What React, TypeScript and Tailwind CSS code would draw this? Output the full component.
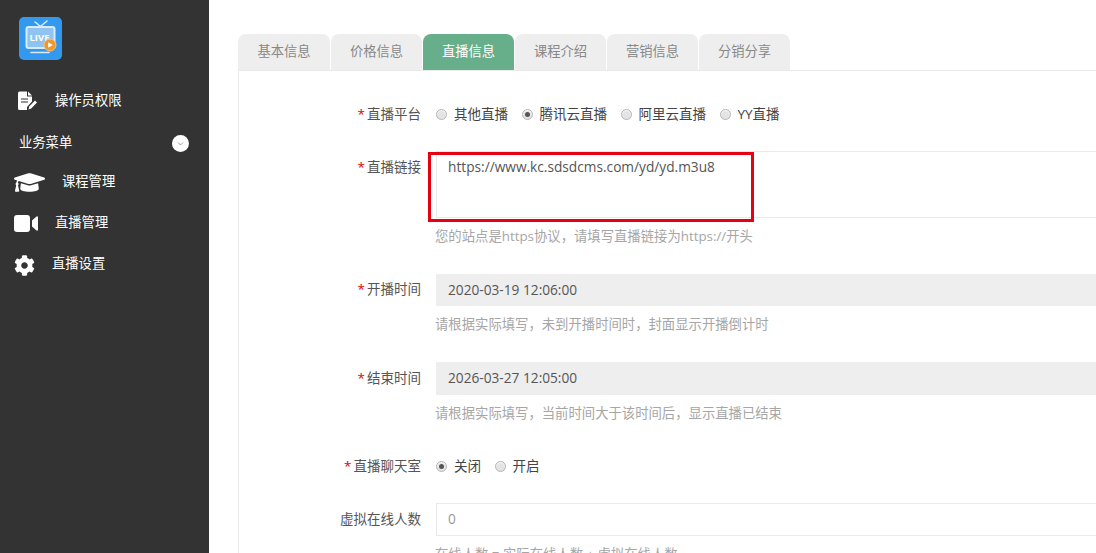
import { FaCog, FaGraduationCap } from 'react-icons/fa';

const FONT = "font-['Open_Sans','Noto_Sans_CJK_SC',sans-serif]";

const tabs = ['基本信息', '价格信息', '直播信息', '课程介绍', '营销信息', '分销分享'];

const Logo = () => (
  <svg width="43" height="43" viewBox="0 0 43 43">
    <rect width="43" height="43" rx="5" fill="#3399ee" />
    <path d="M16 5l5 4M28 4l-6 5" stroke="#d8ebfb" strokeWidth="1.6" strokeLinecap="round" />
    <rect x="7.5" y="10" width="28" height="21" rx="2" fill="#8fc4f2" stroke="#d8ebfb" strokeWidth="2" />
    <text x="10.5" y="24" fontSize="9.5" fontWeight="700" fill="#fff" fontFamily="Open Sans, sans-serif">LIVE</text>
    <path d="M12 35.5h18" stroke="#d8ebfb" strokeWidth="1.6" strokeLinecap="round" />
    <circle cx="31" cy="28" r="6" fill="#f0982a" stroke="#f7c27c" strokeWidth="1" />
    <path d="M29.2 25.2l4.6 2.8-4.6 2.8z" fill="#fff" />
  </svg>
);

const FileEdit = () => (
  <svg width="20" height="20" viewBox="0 0 20 20">
    <path d="M1 2a1.5 1.5 0 011.5-1.5H10V5.5h5v5l-5 5.5v3H2.5A1.5 1.5 0 011 17.5z" fill="#fff" />
    <path d="M11 .5l4 4h-4z" fill="#fff" />
    <path d="M4 8h7M4 11h7" stroke="#333" strokeWidth="1.2" />
    <path d="M11.5 18.5l.7-3 5.8-6 2 2-5.8 6z" fill="#fff" />
  </svg>
);

const Camera = () => (
  <svg width="24" height="17" viewBox="0 0 24 17" className="mt-[1px]">
    <rect x="0" y="0" width="16" height="17" rx="3" fill="#fff" />
    <path d="M18 5.5L22.5 1.5H24V15.5H22.5L18 11.5z" fill="#fff" />
  </svg>
);

const Radio = ({ label, checked = false }: { label: string; checked?: boolean }) => (
  <label className="flex items-center">
    <span className="flex h-[11px] w-[11px] items-center justify-center rounded-full border border-[#b5b5b5] bg-[#e4e4e4] shadow-[inset_0_1px_1px_#fff]">
      {checked && <span className="h-[5px] w-[5px] rounded-full bg-[#555]" />}
    </span>
    <span className="ml-[7px] text-[13.5px] text-[#444]">{label}</span>
  </label>
);

const Label = ({ text, required = true }: { text: string; required?: boolean }) => (
  <div className="w-[183px] shrink-0 pr-[1px] text-right text-[13.5px] leading-[20px] text-[#555]">
    {required && <span className="mr-[2px] text-[#d00]">*</span>}
    {text}
  </div>
);

const Help = ({ children }: { children: string }) => (
  <p className="-ml-[1px] mt-[9px] text-[13.35px] leading-[18px] text-[#a6a6a6]">{children}</p>
);

const MenuRow = ({ icon, label, gap, className }: { icon: React.ReactNode; label: string; gap: string; className: string }) => (
  <div className={`flex items-center text-[13.3px] text-white ${className}`}>
    {icon}
    <span className={gap}>{label}</span>
  </div>
);

export default function App() {
  return (
    <div className={`relative flex h-[553px] w-[1096px] overflow-hidden bg-white ${FONT}`}>
      <aside className="w-[209px] shrink-0 bg-[#333333]">
        <div className="pl-[19px] pt-[17px]">
          <Logo />
        </div>
        <MenuRow className="mt-[31px] h-[20px] pl-[17px]" gap="ml-[18px]" icon={<FileEdit />} label="操作员权限" />
        <div className="mt-[22px] flex h-[20px] items-center justify-between pl-[19px] pr-[20px] text-[13.3px] text-white">
          <span>业务菜单</span>
          <span className="flex h-[17px] w-[17px] items-center justify-center rounded-full bg-white">
            <svg width="9" height="9" viewBox="0 0 9 9" fill="none" stroke="#9a9a9a" strokeWidth="1">
              <path d="M2 3.5l2.5 2.5L7 3.5" />
            </svg>
          </span>
        </div>
        <MenuRow className="mt-[19px] h-[20px] pl-[14px]" gap="ml-[17px]" icon={<FaGraduationCap size={31} color="#fff" />} label="课程管理" />
        <MenuRow className="mt-[21px] h-[20px] pl-[14px]" gap="ml-[17px]" icon={<Camera />} label="直播管理" />
        <MenuRow className="mt-[21px] h-[20px] pl-[14px]" gap="ml-[17px]" icon={<FaCog size={21} color="#fff" className="mt-[2px]" />} label="直播设置" />
      </aside>

      <main className="min-w-0 flex-1 pl-[29px] pt-[34px]">
        <div className="flex gap-[1px]">
          {tabs.map((tab, i) => (
            <div
              key={tab}
              className={`flex h-[36px] items-center justify-center rounded-t-[8px] text-[13.3px] ${i === 0 ? 'w-[92px]' : 'w-[91px]'} ${
                i === 2 ? 'bg-[#67ae8a] text-white' : 'bg-[#eeeeee] text-[#888]'
              }`}
            >
              {tab}
            </div>
          ))}
        </div>

        <div className="h-[500px] w-[900px] border-l border-t border-[#e9e9e9] pt-[33px]">
          <div className="flex items-center">
            <Label text="直播平台" />
            <div className="ml-[14px] flex gap-[13.5px]">
              <Radio label="其他直播" />
              <Radio label="腾讯云直播" checked />
              <Radio label="阿里云直播" />
              <Radio label="YY直播" />
            </div>
          </div>

          <div className="mt-[27px] flex">
            <div className="pt-[6px]">
              <Label text="直播链接" />
            </div>
            <div className="ml-[14px] flex-1">
              <div className="h-[67px] border border-[#e9e9e9] pl-[11px] pt-[5px] text-[13.7px] leading-[20px] text-[#555]">
                https://www.kc.sdsdcms.com/yd/yd.m3u8
              </div>
              <Help>您的站点是https协议，请填写直播链接为https://开头</Help>
            </div>
          </div>

          <div className="mt-[29px] flex">
            <div className="pt-[5px]">
              <Label text="开播时间" />
            </div>
            <div className="ml-[14px] flex-1">
              <div className="flex h-[32px] items-center bg-[#eeeeee] px-[12px] text-[13.7px] text-[#555]">2020-03-19 12:06:00</div>
              <Help>请根据实际填写，未到开播时间时，封面显示开播倒计时</Help>
            </div>
          </div>

          <div className="mt-[29px] flex">
            <div className="pt-[6px]">
              <Label text="结束时间" />
            </div>
            <div className="ml-[14px] flex-1">
              <div className="flex h-[33px] items-center bg-[#eeeeee] px-[12px] text-[13.7px] text-[#555]">2026-03-27 12:05:00</div>
              <Help>请根据实际填写，当前时间大于该时间后，显示直播已结束</Help>
            </div>
          </div>

          <div className="mt-[34px] flex items-center">
            <Label text="直播聊天室" />
            <div className="ml-[14px] flex gap-[13.5px]">
              <Radio label="关闭" checked />
              <Radio label="开启" />
            </div>
          </div>

          <div className="mt-[26px] flex">
            <div className="pt-[6px]">
              <Label text="虚拟在线人数" required={false} />
            </div>
            <div className="ml-[14px] flex-1">
              <div className="flex h-[33px] items-center border border-[#e9e9e9] px-[11px] text-[13.7px] text-[#999]">0</div>
              <Help>在线人数 = 实际在线人数 + 虚拟在线人数</Help>
            </div>
          </div>
        </div>
      </main>

      {/* red annotation box drawn over the screenshot */}
      <div className="absolute left-[428px] top-[152px] h-[70px] w-[326px] border-[3px] border-[#e60012]" />
    </div>
  );
}
